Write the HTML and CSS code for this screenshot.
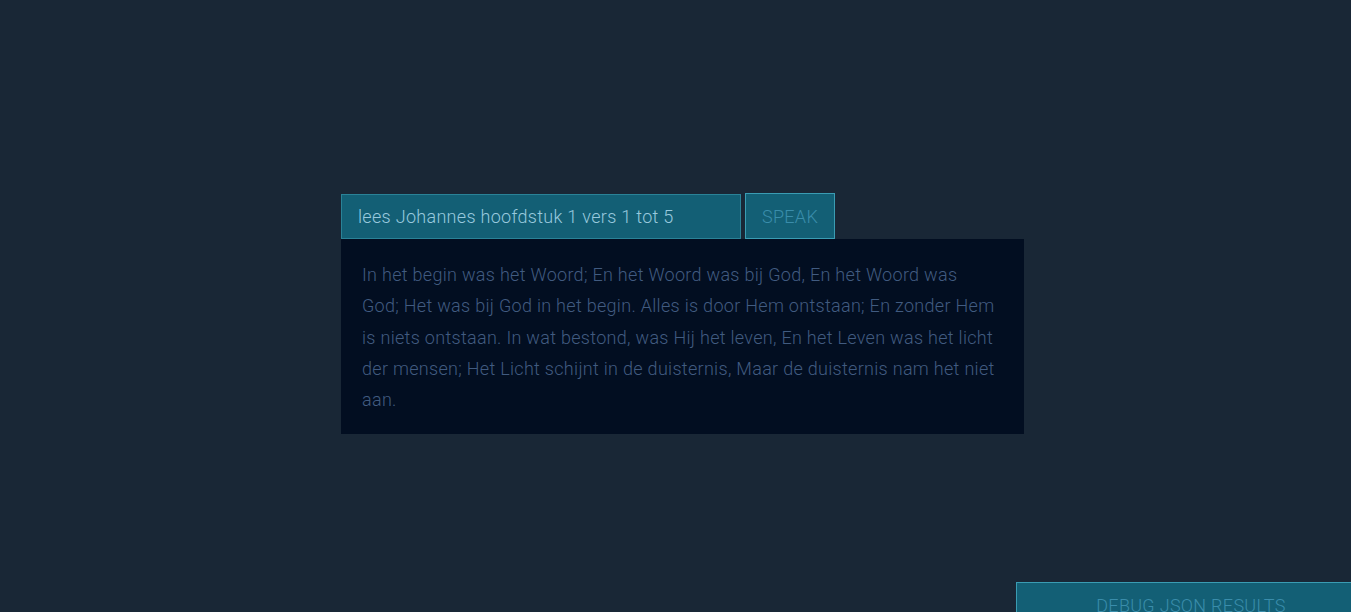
FILE: index.html
```html
<!DOCTYPE html>
<html lang="nl">
<head>
<meta charset="utf-8">
<title>Speak</title>
<link rel="stylesheet" href="styles.css">
</head>
<body>
<main class="app">
  <div class="query-row">
    <div class="query-input">lees Johannes hoofdstuk 1 vers 1 tot 5</div>
    <button class="speak-btn">SPEAK</button>
  </div>
  <div class="result">
    <p>In het begin was het Woord; En het Woord was bij God, En het Woord was God; Het was bij God in het begin. Alles is door Hem ontstaan; En zonder Hem is niets ontstaan. In wat bestond, was Hij het leven, En het Leven was het licht der mensen; Het Licht schijnt in de duisternis, Maar de duisternis nam het niet aan.</p>
  </div>
</main>
<button class="debug-btn">DEBUG JSON RESULTS</button>
</body>
</html>
```

FILE: styles.css
```css
html, body {
  margin: 0;
  padding: 0;
  height: 100%;
  background: #192736;
  overflow: hidden;
}
body {
  font-family: Roboto, "Open Sans", sans-serif;
  font-weight: 300;
  letter-spacing: 0.3px;
}
.app {
  padding-top: 193px;
  padding-left: 341px;
  width: 683px;
}
.query-row {
  display: flex;
  align-items: flex-start;
  gap: 4px;
}
.query-input {
  box-sizing: border-box;
  width: 400px;
  height: 45px;
  margin-top: 1px;
  background: #135f75;
  border: 1px solid #2a8297;
  color: #98c9de;
  font-size: 18px;
  line-height: 43px;
  padding-left: 16px;
}
.speak-btn {
  box-sizing: border-box;
  width: 90px;
  height: 46px;
  background: #135f75;
  border: 1px solid #3a9cb3;
  color: #3a8dab;
  font-family: inherit;
  font-weight: 300;
  font-size: 18px;
  letter-spacing: 0.3px;
  padding: 0;
}
.result {
  background: #020e21;
  padding: 20px 27px 19px 21px;
}
.result p {
  margin: 0;
  color: #415b80;
  font-size: 18px;
  line-height: 31.25px;
}
.debug-btn {
  position: fixed;
  left: 1016px;
  top: 582px;
  width: 350px;
  height: 46px;
  box-sizing: border-box;
  background: #135f75;
  border: 1px solid #3a9cb3;
  color: #3a8dab;
  font-family: inherit;
  font-weight: 300;
  font-size: 18px;
  letter-spacing: 0.3px;
  padding: 0;
  text-align: center;
}
```
